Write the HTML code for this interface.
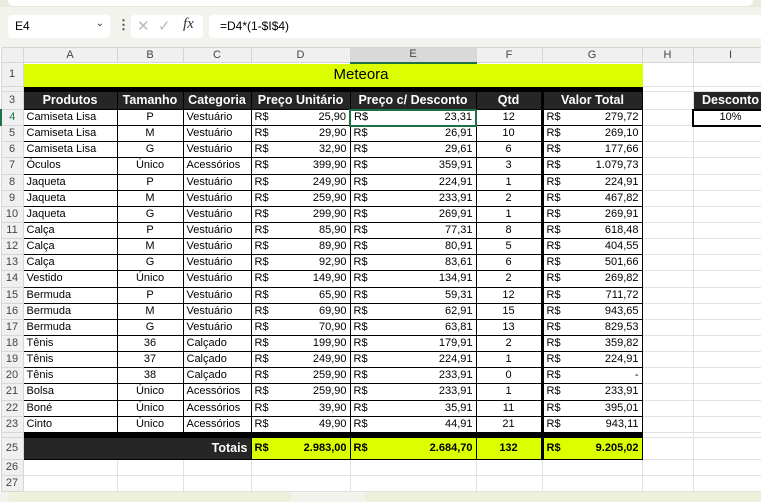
<!DOCTYPE html>
<html><head><meta charset="utf-8"><style>
*{margin:0;padding:0;box-sizing:border-box}
body{width:761px;height:499px;overflow:hidden;background:#f3f3ee;font-family:"Liberation Sans",sans-serif;font-size:11px;position:relative}
.top{position:absolute;left:0;top:0;width:761px;height:7px;background:#e9ecdc}
.pill{position:absolute;left:8px;top:-6px;width:745px;height:12px;background:#fff;border-radius:6px}
.nb{position:absolute;left:8px;top:15px;width:102px;height:23px;background:#fff;border-radius:4px;font-size:12px;padding:4px 7px}
.nb .ar{position:absolute;right:6px;top:3px;font-size:10px;color:#333}
.dots{position:absolute;left:117px;top:17px;font-size:13px;font-weight:bold;color:#444}
.fx{position:absolute;left:131px;top:15px;width:72px;height:23px;background:#fff;border-radius:4px;color:#bbb;font-size:15px}
.fb{position:absolute;left:209px;top:15px;width:560px;height:23px;background:#fff;border-radius:4px 0 0 4px;font-size:12px;padding:4px 11px}
table{position:absolute;left:0;top:47px;width:767px;border-collapse:collapse;table-layout:fixed;background:#fff}
td{overflow:hidden;white-space:nowrap;border:1px solid #e1e1e1;padding:0 3px;line-height:1}
tr.h td{background:#f0f0f0;color:#444;text-align:center;height:15px;border-color:#d6d6d6}
td.rh{background:#f0f0f0;color:#444;text-align:center;padding:0;border-color:#d6d6d6}
tr.d td{height:16.15px}
tr.d td.b{border:1px solid #000}
.c{text-align:center}.r{text-align:right}
.dk{background:#262626;color:#fff;font-weight:bold;font-size:12.5px;text-align:center;border:1px solid #000}
.y{background:#dcff00}
.blk td.x{background:#000;border-color:#000}
.rs{display:flex;justify-content:space-between}
.bars{position:absolute;top:492px;height:10px;background:#eef0dc;border-radius:4px}
</style></head><body>
<div class="top"><div class="pill"></div></div>
<div class="nb">E4<span class="ar">&#8964;</span></div>
<div class="dots">&#8942;</div>
<div class="fx"><span style="position:absolute;left:6px;top:2px">&#10005;</span><span style="position:absolute;left:27px;top:2px">&#10003;</span><i style="position:absolute;left:52px;top:1px;color:#333;font-family:'Liberation Serif',serif">fx</i></div>
<div class="fb">=D4*(1-$I$4)</div>
<table>
<colgroup><col style="width:22px"><col style="width:94px"><col style="width:66px"><col style="width:68px"><col style="width:99px"><col style="width:126px"><col style="width:66px"><col style="width:100px"><col style="width:51px"><col style="width:75px"></colgroup>
<tr class="h"><td style="background:#f0f0f0"></td><td>A</td><td>B</td><td>C</td><td>D</td><td style="background:#d9d9d9;border-bottom:2px solid #1e7145">E</td><td>F</td><td>G</td><td>H</td><td>I</td></tr>
<tr style="height:24px"><td class="rh">1</td><td colspan="7" class="y" style="text-align:center;font-size:15px;padding-left:60px;border-color:#dcff00">Meteora</td><td></td><td></td></tr>
<tr class="blk" style="height:5px"><td class="rh"></td><td class="x" colspan="7"></td><td></td><td></td></tr>
<tr style="height:18px"><td class="rh">3</td><td class="dk">Produtos</td><td class="dk">Tamanho</td><td class="dk">Categoria</td><td class="dk">Preço Unitário</td><td class="dk">Preço c/ Desconto</td><td class="dk">Qtd</td><td class="dk" style="border-left:3px solid #000">Valor Total</td><td></td><td class="dk">Desconto</td></tr>
<tr class="d"><td class="rh" style="color:#1e7145;border-left:2px solid #1e7145">4</td><td class="b">Camiseta Lisa</td><td class="b c">P</td><td class="b">Vestuário</td><td class="b"><div class="rs"><span>R$</span><span>25,90</span></div></td><td class="b" style="border:2px solid #1e7145"><div class="rs"><span>R$</span><span>23,31</span></div></td><td class="b c">12</td><td class="b" style="border-left:3px solid #000"><div class="rs"><span>R$</span><span>279,72</span></div></td><td></td><td class="b c" style="border:2px solid #000">10%</td></tr>
<tr class="d"><td class="rh">5</td><td class="b">Camiseta Lisa</td><td class="b c">M</td><td class="b">Vestuário</td><td class="b"><div class="rs"><span>R$</span><span>29,90</span></div></td><td class="b"><div class="rs"><span>R$</span><span>26,91</span></div></td><td class="b c">10</td><td class="b" style="border-left:3px solid #000"><div class="rs"><span>R$</span><span>269,10</span></div></td><td></td><td></td></tr>
<tr class="d"><td class="rh">6</td><td class="b">Camiseta Lisa</td><td class="b c">G</td><td class="b">Vestuário</td><td class="b"><div class="rs"><span>R$</span><span>32,90</span></div></td><td class="b"><div class="rs"><span>R$</span><span>29,61</span></div></td><td class="b c">6</td><td class="b" style="border-left:3px solid #000"><div class="rs"><span>R$</span><span>177,66</span></div></td><td></td><td></td></tr>
<tr class="d"><td class="rh">7</td><td class="b">Óculos</td><td class="b c">Único</td><td class="b">Acessórios</td><td class="b"><div class="rs"><span>R$</span><span>399,90</span></div></td><td class="b"><div class="rs"><span>R$</span><span>359,91</span></div></td><td class="b c">3</td><td class="b" style="border-left:3px solid #000"><div class="rs"><span>R$</span><span>1.079,73</span></div></td><td></td><td></td></tr>
<tr class="d"><td class="rh">8</td><td class="b">Jaqueta</td><td class="b c">P</td><td class="b">Vestuário</td><td class="b"><div class="rs"><span>R$</span><span>249,90</span></div></td><td class="b"><div class="rs"><span>R$</span><span>224,91</span></div></td><td class="b c">1</td><td class="b" style="border-left:3px solid #000"><div class="rs"><span>R$</span><span>224,91</span></div></td><td></td><td></td></tr>
<tr class="d"><td class="rh">9</td><td class="b">Jaqueta</td><td class="b c">M</td><td class="b">Vestuário</td><td class="b"><div class="rs"><span>R$</span><span>259,90</span></div></td><td class="b"><div class="rs"><span>R$</span><span>233,91</span></div></td><td class="b c">2</td><td class="b" style="border-left:3px solid #000"><div class="rs"><span>R$</span><span>467,82</span></div></td><td></td><td></td></tr>
<tr class="d"><td class="rh">10</td><td class="b">Jaqueta</td><td class="b c">G</td><td class="b">Vestuário</td><td class="b"><div class="rs"><span>R$</span><span>299,90</span></div></td><td class="b"><div class="rs"><span>R$</span><span>269,91</span></div></td><td class="b c">1</td><td class="b" style="border-left:3px solid #000"><div class="rs"><span>R$</span><span>269,91</span></div></td><td></td><td></td></tr>
<tr class="d"><td class="rh">11</td><td class="b">Calça</td><td class="b c">P</td><td class="b">Vestuário</td><td class="b"><div class="rs"><span>R$</span><span>85,90</span></div></td><td class="b"><div class="rs"><span>R$</span><span>77,31</span></div></td><td class="b c">8</td><td class="b" style="border-left:3px solid #000"><div class="rs"><span>R$</span><span>618,48</span></div></td><td></td><td></td></tr>
<tr class="d"><td class="rh">12</td><td class="b">Calça</td><td class="b c">M</td><td class="b">Vestuário</td><td class="b"><div class="rs"><span>R$</span><span>89,90</span></div></td><td class="b"><div class="rs"><span>R$</span><span>80,91</span></div></td><td class="b c">5</td><td class="b" style="border-left:3px solid #000"><div class="rs"><span>R$</span><span>404,55</span></div></td><td></td><td></td></tr>
<tr class="d"><td class="rh">13</td><td class="b">Calça</td><td class="b c">G</td><td class="b">Vestuário</td><td class="b"><div class="rs"><span>R$</span><span>92,90</span></div></td><td class="b"><div class="rs"><span>R$</span><span>83,61</span></div></td><td class="b c">6</td><td class="b" style="border-left:3px solid #000"><div class="rs"><span>R$</span><span>501,66</span></div></td><td></td><td></td></tr>
<tr class="d"><td class="rh">14</td><td class="b">Vestido</td><td class="b c">Único</td><td class="b">Vestuário</td><td class="b"><div class="rs"><span>R$</span><span>149,90</span></div></td><td class="b"><div class="rs"><span>R$</span><span>134,91</span></div></td><td class="b c">2</td><td class="b" style="border-left:3px solid #000"><div class="rs"><span>R$</span><span>269,82</span></div></td><td></td><td></td></tr>
<tr class="d"><td class="rh">15</td><td class="b">Bermuda</td><td class="b c">P</td><td class="b">Vestuário</td><td class="b"><div class="rs"><span>R$</span><span>65,90</span></div></td><td class="b"><div class="rs"><span>R$</span><span>59,31</span></div></td><td class="b c">12</td><td class="b" style="border-left:3px solid #000"><div class="rs"><span>R$</span><span>711,72</span></div></td><td></td><td></td></tr>
<tr class="d"><td class="rh">16</td><td class="b">Bermuda</td><td class="b c">M</td><td class="b">Vestuário</td><td class="b"><div class="rs"><span>R$</span><span>69,90</span></div></td><td class="b"><div class="rs"><span>R$</span><span>62,91</span></div></td><td class="b c">15</td><td class="b" style="border-left:3px solid #000"><div class="rs"><span>R$</span><span>943,65</span></div></td><td></td><td></td></tr>
<tr class="d"><td class="rh">17</td><td class="b">Bermuda</td><td class="b c">G</td><td class="b">Vestuário</td><td class="b"><div class="rs"><span>R$</span><span>70,90</span></div></td><td class="b"><div class="rs"><span>R$</span><span>63,81</span></div></td><td class="b c">13</td><td class="b" style="border-left:3px solid #000"><div class="rs"><span>R$</span><span>829,53</span></div></td><td></td><td></td></tr>
<tr class="d"><td class="rh">18</td><td class="b">Tênis</td><td class="b c">36</td><td class="b">Calçado</td><td class="b"><div class="rs"><span>R$</span><span>199,90</span></div></td><td class="b"><div class="rs"><span>R$</span><span>179,91</span></div></td><td class="b c">2</td><td class="b" style="border-left:3px solid #000"><div class="rs"><span>R$</span><span>359,82</span></div></td><td></td><td></td></tr>
<tr class="d"><td class="rh">19</td><td class="b">Tênis</td><td class="b c">37</td><td class="b">Calçado</td><td class="b"><div class="rs"><span>R$</span><span>249,90</span></div></td><td class="b"><div class="rs"><span>R$</span><span>224,91</span></div></td><td class="b c">1</td><td class="b" style="border-left:3px solid #000"><div class="rs"><span>R$</span><span>224,91</span></div></td><td></td><td></td></tr>
<tr class="d"><td class="rh">20</td><td class="b">Tênis</td><td class="b c">38</td><td class="b">Calçado</td><td class="b"><div class="rs"><span>R$</span><span>259,90</span></div></td><td class="b"><div class="rs"><span>R$</span><span>233,91</span></div></td><td class="b c">0</td><td class="b" style="border-left:3px solid #000"><div class="rs"><span>R$</span><span>-</span></div></td><td></td><td></td></tr>
<tr class="d"><td class="rh">21</td><td class="b">Bolsa</td><td class="b c">Único</td><td class="b">Acessórios</td><td class="b"><div class="rs"><span>R$</span><span>259,90</span></div></td><td class="b"><div class="rs"><span>R$</span><span>233,91</span></div></td><td class="b c">1</td><td class="b" style="border-left:3px solid #000"><div class="rs"><span>R$</span><span>233,91</span></div></td><td></td><td></td></tr>
<tr class="d"><td class="rh">22</td><td class="b">Boné</td><td class="b c">Único</td><td class="b">Acessórios</td><td class="b"><div class="rs"><span>R$</span><span>39,90</span></div></td><td class="b"><div class="rs"><span>R$</span><span>35,91</span></div></td><td class="b c">11</td><td class="b" style="border-left:3px solid #000"><div class="rs"><span>R$</span><span>395,01</span></div></td><td></td><td></td></tr>
<tr class="d"><td class="rh">23</td><td class="b">Cinto</td><td class="b c">Único</td><td class="b">Acessórios</td><td class="b"><div class="rs"><span>R$</span><span>49,90</span></div></td><td class="b"><div class="rs"><span>R$</span><span>44,91</span></div></td><td class="b c">21</td><td class="b" style="border-left:3px solid #000"><div class="rs"><span>R$</span><span>943,11</span></div></td><td></td><td></td></tr>
<tr class="blk" style="height:5px"><td class="rh"></td><td class="x" colspan="7"></td><td></td><td></td></tr>
<tr style="height:22px;font-weight:bold"><td class="rh" style="font-weight:normal">25</td><td colspan="3" class="r" style="background:#262626;color:#fff;font-size:12.5px;border:1px solid #000">Totais</td><td class="y" style="border:1px solid #000"><div class="rs"><span>R$</span><span>2.983,00</span></div></td><td class="y" style="border:1px solid #000"><div class="rs"><span>R$</span><span>2.684,70</span></div></td><td class="y c" style="border:1px solid #000">132</td><td class="y" style="border:1px solid #000;border-left:3px solid #000"><div class="rs"><span>R$</span><span>9.205,02</span></div></td><td></td><td></td></tr>
<tr style="height:16px"><td class="rh">26</td><td></td><td></td><td></td><td></td><td></td><td></td><td></td><td></td><td></td></tr>
<tr style="height:16px"><td class="rh">27</td><td></td><td></td><td></td><td></td><td></td><td></td><td></td><td></td><td></td></tr>
</table>
<div class="bars" style="left:8px;width:283px"></div>
<div class="bars" style="left:365px;width:400px"></div>
</body></html>
